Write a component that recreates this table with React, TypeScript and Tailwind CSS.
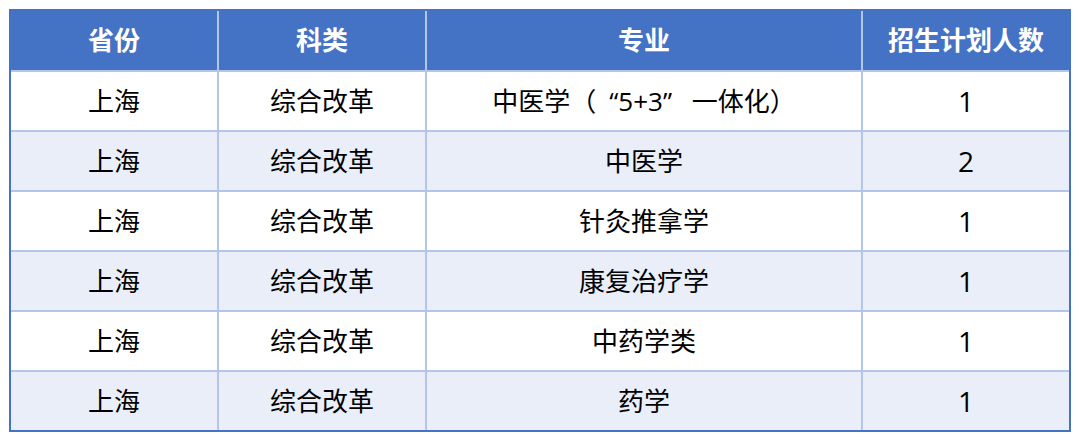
const rows = [
  { province: "上海", kind: "综合改革", major: "中医学（\u2002“5+3”\u2002 一体化）", plan: "1" },
  { province: "上海", kind: "综合改革", major: "中医学", plan: "2" },
  { province: "上海", kind: "综合改革", major: "针灸推拿学", plan: "1" },
  { province: "上海", kind: "综合改革", major: "康复治疗学", plan: "1" },
  { province: "上海", kind: "综合改革", major: "中药学类", plan: "1" },
  { province: "上海", kind: "综合改革", major: "药学", plan: "1" },
];

const headers = ["省份", "科类", "专业", "招生计划人数"];

export default function App() {
  return (
    <div
      className="w-[1080px] h-[444px] bg-white pt-[9px] pl-[9px]"
      style={{ fontFamily: '"Open Sans", "Noto Sans CJK SC", sans-serif' }}
    >
      <div className="w-[1062px] border-2 border-[#4472c4]">
        {/* header */}
        <div className="grid grid-cols-[208px_208px_436px_1fr] h-[61px] bg-[#4472c4]">
          {headers.map((h, i) => (
            <div
              key={h}
              className={`flex items-center justify-center text-[26px] font-bold text-white border-b-2 border-[#b4c6e7] ${
                i < 3 ? "border-r-2" : ""
              }`}
            >
              {h}
            </div>
          ))}
        </div>

        {rows.map((r, idx) => {
          const last = idx === rows.length - 1;
          const bg = idx % 2 === 1 ? "bg-[#e9eef8]" : "bg-white";
          const cells = [r.province, r.kind, r.major, r.plan];
          return (
            <div
              key={idx}
              className={`grid grid-cols-[208px_208px_436px_1fr] ${last ? "h-[58px]" : "h-[60px]"} ${bg}`}
            >
              {cells.map((c, i) => (
                <div
                  key={i}
                  className={`flex items-center justify-center text-black border-[#b4c6e7] ${
                    i < 3 ? "border-r-2 text-[26px]" : "text-[28px]"
                  } ${last ? "" : "border-b-2"}`}
                >
                  {c}
                </div>
              ))}
            </div>
          );
        })}
      </div>
    </div>
  );
}
